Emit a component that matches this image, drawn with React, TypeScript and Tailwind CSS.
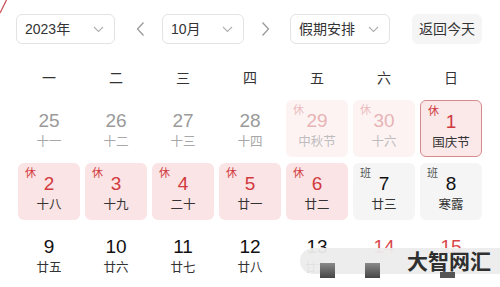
import React from 'react'

type Kind = 'past' | 'fadedRest' | 'today' | 'rest' | 'work' | 'normal' | 'weekend'

interface Day {
  num: number
  lunar?: string
  kind: Kind
  tag?: string
}

const weekdays = ['一', '二', '三', '四', '五', '六', '日']

// lunar text of 14 / 15 sits under the watermark bar, so it's left out
const days: Day[] = [
  { num: 25, lunar: '十一', kind: 'past' },
  { num: 26, lunar: '十二', kind: 'past' },
  { num: 27, lunar: '十三', kind: 'past' },
  { num: 28, lunar: '十四', kind: 'past' },
  { num: 29, lunar: '中秋节', kind: 'fadedRest', tag: '休' },
  { num: 30, lunar: '十六', kind: 'fadedRest', tag: '休' },
  { num: 1, lunar: '国庆节', kind: 'today', tag: '休' },
  { num: 2, lunar: '十八', kind: 'rest', tag: '休' },
  { num: 3, lunar: '十九', kind: 'rest', tag: '休' },
  { num: 4, lunar: '二十', kind: 'rest', tag: '休' },
  { num: 5, lunar: '廿一', kind: 'rest', tag: '休' },
  { num: 6, lunar: '廿二', kind: 'rest', tag: '休' },
  { num: 7, lunar: '廿三', kind: 'work', tag: '班' },
  { num: 8, lunar: '寒露', kind: 'work', tag: '班' },
  { num: 9, lunar: '廿五', kind: 'normal' },
  { num: 10, lunar: '廿六', kind: 'normal' },
  { num: 11, lunar: '廿七', kind: 'normal' },
  { num: 12, lunar: '廿八', kind: 'normal' },
  { num: 13, lunar: '廿九', kind: 'normal' },
  { num: 14, kind: 'weekend' },
  { num: 15, kind: 'weekend' },
]

const cellStyles: Record<Kind, { box: string; num: string; lunar: string; tag: string }> = {
  past: { box: '', num: 'text-[#9a9a9a]', lunar: 'text-[#a8a8a8]', tag: '' },
  fadedRest: { box: 'bg-[#fdf3f3]', num: 'text-[#e8b3b5]', lunar: 'text-[#bdbdbd]', tag: 'text-[#ecbcbe]' },
  today: {
    box: 'bg-[#fbe9ea] border-[1.5px] border-[#d68a8e]',
    num: 'text-[#d0383e]',
    lunar: 'text-[#333]',
    tag: 'text-[#d0383e]',
  },
  rest: { box: 'bg-[#fae4e5]', num: 'text-[#d23a40]', lunar: 'text-[#333]', tag: 'text-[#d23a40]' },
  work: { box: 'bg-[#f5f5f5]', num: 'text-[#111]', lunar: 'text-[#333]', tag: 'text-[#555]' },
  normal: { box: '', num: 'text-[#111]', lunar: 'text-[#333]', tag: '' },
  weekend: { box: '', num: 'text-[#d9474d]', lunar: 'text-[#333]', tag: '' },
}

function DownChevron() {
  return (
    <svg width="11" height="7" viewBox="0 0 11 7" fill="none">
      <path d="M1 1l4.5 4.5L10 1" stroke="#b0b0b0" strokeWidth="1.1" />
    </svg>
  )
}

function SideChevron({ dir }: { dir: 'left' | 'right' }) {
  return (
    <svg width="12" height="16" viewBox="0 0 12 16" fill="none">
      <path
        d={dir === 'left' ? 'M8.5 1.5L2.5 8l6 6.5' : 'M3.5 1.5L9.5 8l-6 6.5'}
        stroke="#9a9a9a"
        strokeWidth="1.3"
      />
    </svg>
  )
}

function Select({ label, width }: { label: string; width: string }) {
  return (
    <div
      className={`${width} flex h-[30px] items-center justify-between rounded-[6px] border border-[#e3e3e3] pl-[8px] pr-[10px] text-[14px] text-[#333]`}
    >
      <span>{label}</span>
      <DownChevron />
    </div>
  )
}

function DayCell({ day }: { day: Day }) {
  const s = cellStyles[day.kind]
  return (
    <div className={`relative flex h-[57px] flex-col items-center rounded-[6px] pt-[10px] ${s.box}`}>
      {day.tag && (
        <span className={`absolute left-[7px] top-[3px] text-[11px] leading-[14px] ${s.tag}`}>{day.tag}</span>
      )}
      <span className={`text-[19px] leading-[22px] ${s.num}`}>{day.num}</span>
      {day.lunar && <span className={`mt-[2px] text-[12.5px] leading-[16px] ${s.lunar}`}>{day.lunar}</span>}
    </div>
  )
}

export default function App() {
  return (
    <div
      className="relative h-[287px] w-[500px] overflow-hidden bg-white"
      style={{ fontFamily: '"Liberation Sans", "Noto Sans CJK SC", sans-serif' }}
    >
      <svg className="absolute left-0 top-0" width="8" height="14" viewBox="0 0 8 14">
        <path d="M0 13L6.5 0" stroke="#c9484e" strokeWidth="1.2" />
      </svg>

      <div className="flex items-center pl-[16px] pt-[14px]">
        <Select label="2023年" width="w-[99px]" />
        <div className="ml-[20px] mr-[15px] flex">
          <SideChevron dir="left" />
        </div>
        <Select label="10月" width="w-[82px]" />
        <div className="ml-[15px] mr-[19px] flex">
          <SideChevron dir="right" />
        </div>
        <Select label="假期安排" width="w-[100px]" />
        <div className="ml-[22px] flex h-[30px] w-[70px] items-center justify-center rounded-[6px] bg-[#f5f5f5] text-[14px] text-[#333]">
          返回今天
        </div>
      </div>

      <div className="mt-[24px] grid grid-cols-7 gap-x-[5px] px-[18px]">
        {weekdays.map((w) => (
          <div key={w} className="text-center text-[14px] leading-[20px] text-[#333]">
            {w}
          </div>
        ))}
      </div>

      <div className="mt-[12px] grid grid-cols-7 gap-x-[5px] gap-y-[6px] px-[18px]">
        {days.map((d) => (
          <DayCell key={`${d.kind}-${d.num}`} day={d} />
        ))}
      </div>

      {/* watermark bar */}
      <div className="absolute left-[300px] top-[248px] flex h-[26px] w-[200px] items-center justify-end rounded-l-full bg-[#ececec]/95 pr-[9px]">
        <span className="text-[21px] font-bold leading-none text-[#2f2f2f]">大智网汇</span>
      </div>
      <div className="absolute left-[320px] top-[263px] h-[15px] w-[15px] bg-gradient-to-b from-[#8a8a8a] to-[#454545]" />
      <div className="absolute left-[365px] top-[263px] h-[15px] w-[15px] bg-gradient-to-b from-[#8a8a8a] to-[#454545]" />
      <div className="absolute left-[440px] top-[272px] h-[6px] w-[15px] bg-[#555]" />
    </div>
  )
}
